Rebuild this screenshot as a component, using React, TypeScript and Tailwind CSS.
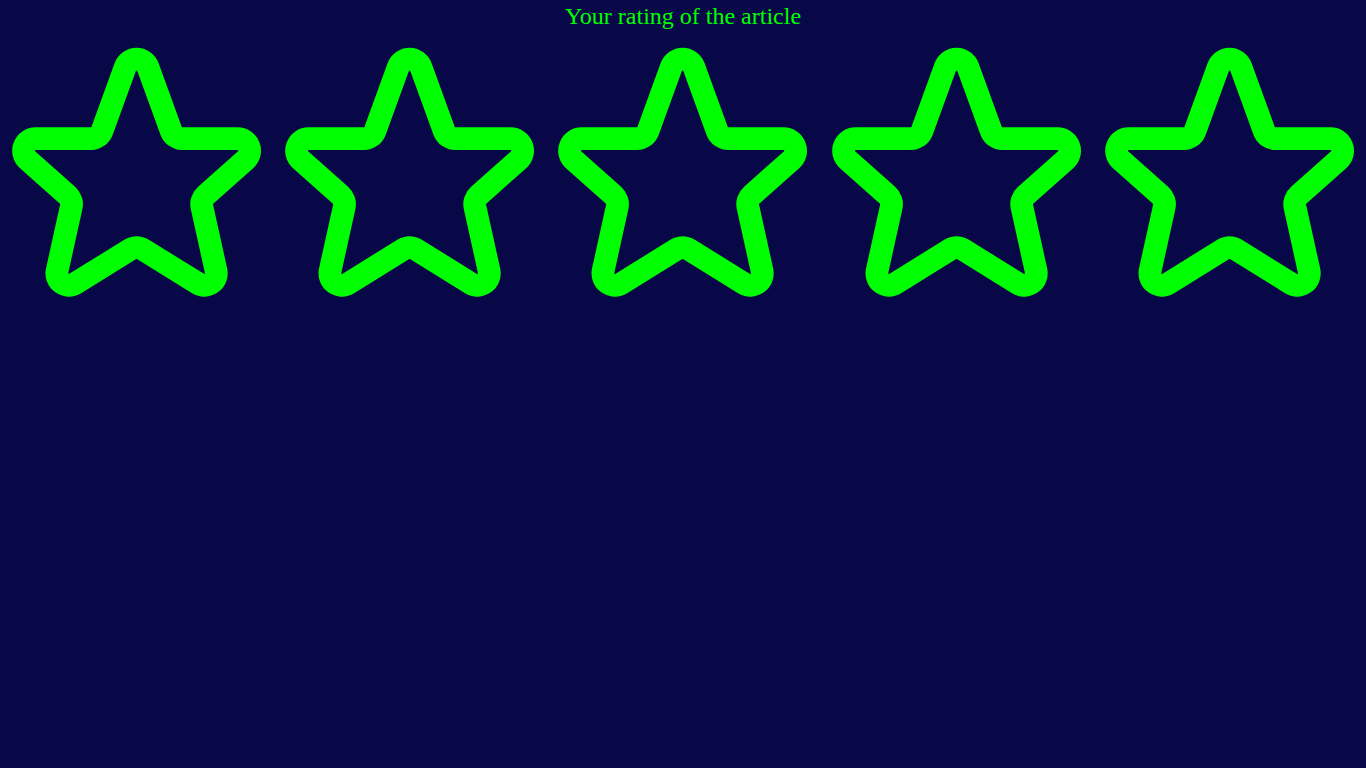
type Pt = [number, number];

// centre-line corners of one star, in page pixels for the first cell
const corners: Pt[] = [
  [136.6, 36],
  [174, 138.7],
  [269.2, 138.7],
  [200.4, 199.9],
  [222.2, 298.5],
  [136.6, 245.5],
  [51, 298.5],
  [72.8, 199.9],
  [4, 138.7],
  [99.2, 138.7],
];

function roundedPath(pts: Pt[], r: number) {
  const n = pts.length;
  let d = "";
  for (let i = 0; i < n; i++) {
    const a = pts[(i - 1 + n) % n];
    const p = pts[i];
    const c = pts[(i + 1) % n];
    const l1 = Math.hypot(a[0] - p[0], a[1] - p[1]);
    const l2 = Math.hypot(c[0] - p[0], c[1] - p[1]);
    const u1: Pt = [(a[0] - p[0]) / l1, (a[1] - p[1]) / l1];
    const u2: Pt = [(c[0] - p[0]) / l2, (c[1] - p[1]) / l2];
    const cos = Math.max(-1, Math.min(1, u1[0] * u2[0] + u1[1] * u2[1]));
    const phi = Math.acos(cos);
    const t = r / Math.tan(phi / 2);
    const t1: Pt = [p[0] + u1[0] * t, p[1] + u1[1] * t];
    const t2: Pt = [p[0] + u2[0] * t, p[1] + u2[1] * t];
    const cross = (p[0] - a[0]) * (c[1] - p[1]) - (p[1] - a[1]) * (c[0] - p[0]);
    const sweep = cross > 0 ? 1 : 0;
    d += `${i === 0 ? "M" : "L"}${t1[0].toFixed(2)} ${t1[1].toFixed(2)} `;
    d += `A${r} ${r} 0 0 ${sweep} ${t2[0].toFixed(2)} ${t2[1].toFixed(2)} `;
  }
  return d + "Z";
}

const starPath = roundedPath(corners, 12);

function Star() {
  return (
    <svg viewBox="0 32 273.2 280" className="block w-full h-auto" fill="none">
      <path d={starPath} stroke="#00ff00" strokeWidth={22.7} strokeLinejoin="round" />
    </svg>
  );
}

export default function App() {
  return (
    <div className="min-h-screen w-full bg-[#080748] font-['Liberation_Serif',serif]">
      <h2 className="h-[32px] pt-[3px] text-center text-[24px] leading-[normal] font-normal text-[#00ff00]">
        Your rating of the article
      </h2>
      <div className="grid grid-cols-5">
        {[0, 1, 2, 3, 4].map((i) => (
          <Star key={i} />
        ))}
      </div>
    </div>
  );
}
